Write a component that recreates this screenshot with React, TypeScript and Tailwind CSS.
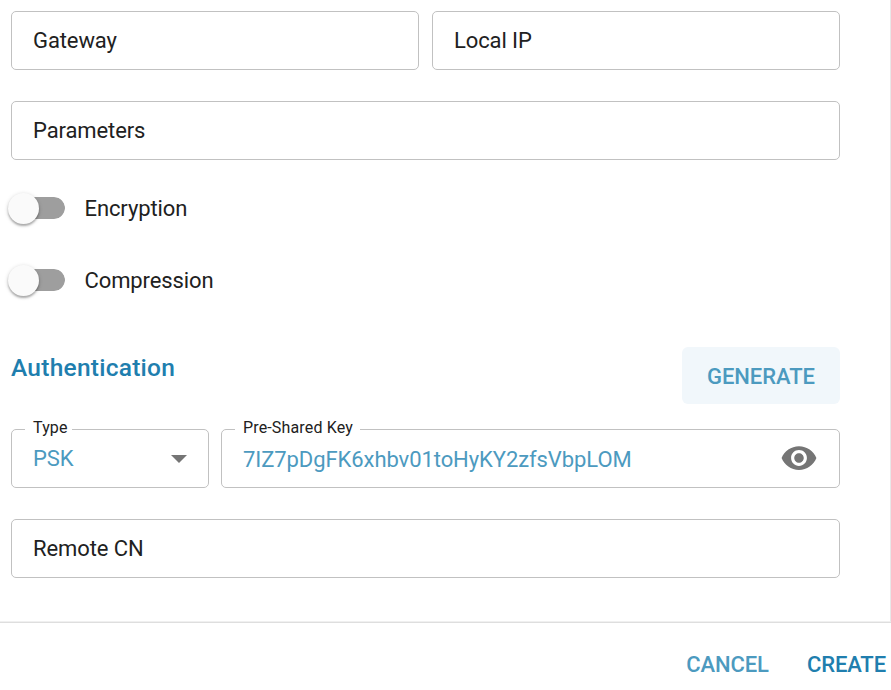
import type { ReactNode } from "react";

function EmptyField({ label, className = "" }: { label: string; className?: string }) {
  return (
    <div className={`flex h-[59px] items-center rounded-[5px] border border-[#c1c1c1] px-[21px] ${className}`}>
      <span className="text-[22px] leading-[26px] tracking-[-0.1px]">{label}</span>
    </div>
  );
}

function NotchedField({ label, className, legendClassName, children }: { label: string; className: string; legendClassName: string; children: ReactNode }) {
  return (
    <fieldset className={`h-[69px] min-w-0 rounded-[5px] border border-[#c1c1c1] ${className}`}>
      <legend className={`ml-[13px] h-[21px] pl-2 pb-1 text-[16px] leading-[17px] tracking-[0.15px] whitespace-nowrap ${legendClassName}`}>{label}</legend>
      <div className="flex h-[38px] items-center pl-[21px] text-[#4c9abf]">{children}</div>
    </fieldset>
  );
}

function Toggle({ label }: { label: string }) {
  return (
    <label className="flex h-8 items-center">
      <span className="mr-[19.5px] -ml-[3px] flex h-[22px] w-[57px] items-center rounded-full border-l-[8px] border-transparent bg-[#9e9e9e] [background-clip:padding-box]">
        <span className="-ml-[8px] size-[31px] shrink-0 rounded-full bg-[#fafafa] shadow-[0_2px_2px_rgba(0,0,0,0.25),0_1px_4px_rgba(0,0,0,0.18)]" />
      </span>
      <span className="pt-0.5 text-[22px] leading-[26px] tracking-[-0.1px]">{label}</span>
    </label>
  );
}

export default function App() {
  return (
    <div className="flex h-[690px] w-[891px] flex-col overflow-hidden bg-white font-['Roboto',sans-serif] text-[#212121]">
      <main className="h-[622px] border-r border-b border-r-[#e8e8e8] border-b-[#f0f0f0] pt-[11px] pr-[50px] pl-[11px]">
        <div className="flex gap-[13px]">
          <EmptyField label="Gateway" className="w-[408px]" />
          <EmptyField label="Local IP" className="w-[408px]" />
        </div>
        <EmptyField label="Parameters" className="mt-[31px]" />
        <div className="mt-8 flex flex-col gap-10">
          <Toggle label="Encryption" />
          <Toggle label="Compression" />
        </div>
        <div className="mt-[51px] flex h-[57px] justify-between">
          <h2 className="mt-[6px] text-[24.5px] leading-[30px] font-medium tracking-[0.25px] text-[#207eae]">Authentication</h2>
          <button className="h-[57px] w-[158px] rounded-[6px] bg-[#f1f7fb] pt-0.5 text-[22px] leading-[26px] font-medium tracking-[-0.05px] text-[#4c9abf]">GENERATE</button>
        </div>
        <div className="mt-[15px] flex gap-3">
          <NotchedField label="Type" className="w-[198px]" legendClassName="pr-1">
            <span className="text-[22px] leading-[26px] tracking-[-0.1px]">PSK</span>
            <svg className="mr-[21px] ml-auto h-2 w-4" viewBox="0 0 16 8" fill="#757575">
              <path d="M0 0h16L8 8z" />
            </svg>
          </NotchedField>
          <NotchedField label="Pre-Shared Key" className="flex-1" legendClassName="pr-[7px]">
            <span className="pt-0.5 text-[22px] leading-[26px] tracking-[-0.08px]">7IZ7pDgFK6xhbv01toHyKY2zfsVbpLOM</span>
            <svg className="mr-[21px] mb-0.5 ml-auto size-[38px]" viewBox="0 0 24 24" fill="#757575">
              <path d="M12 4.5C7 4.5 2.73 7.61 1 12c1.73 4.39 6 7.5 11 7.5s9.27-3.11 11-7.5c-1.73-4.39-6-7.5-11-7.5zM12 17c-2.76 0-5-2.24-5-5s2.24-5 5-5 5 2.24 5 5-2.24 5-5 5zm0-8c-1.66 0-3 1.34-3 3s1.34 3 3 3 3-1.34 3-3-1.34-3-3-3z" />
            </svg>
          </NotchedField>
        </div>
        <EmptyField label="Remote CN" className="mt-[31px]" />
      </main>
      <footer className="flex h-[68px] justify-end gap-[38px] border-t border-[#dedede] pt-[29px] pr-[5px] text-[22px] leading-[26px] font-medium tracking-[-0.1px]">
        <button className="h-[26px] text-[#4c9abf]">CANCEL</button>
        <button className="h-[26px] text-[#207eae]">CREATE</button>
      </footer>
    </div>
  );
}
